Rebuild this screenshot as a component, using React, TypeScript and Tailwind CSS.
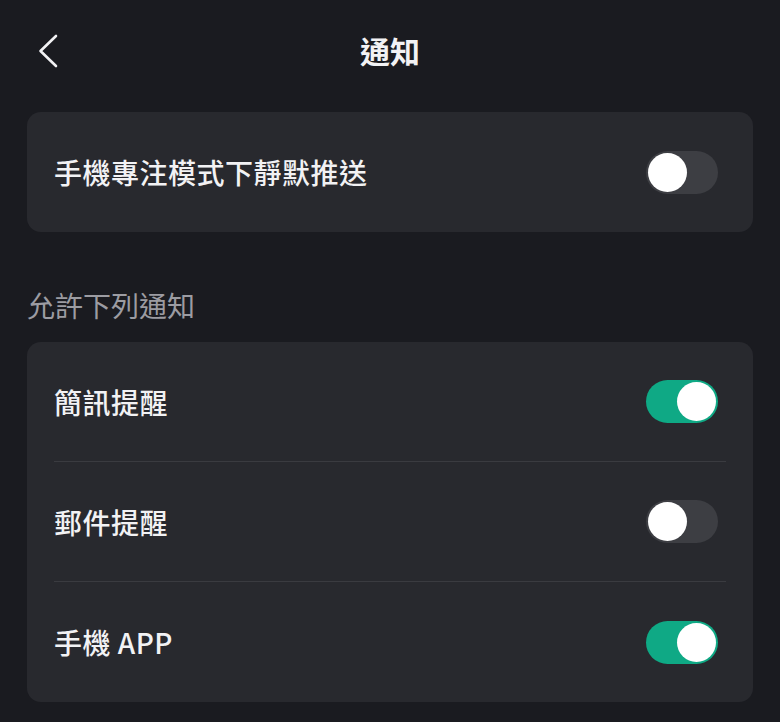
import { useState } from 'react';

function Toggle({ on, onChange }: { on: boolean; onChange: () => void }) {
    return (
        <button
            onClick={onChange}
            className={`relative w-[72px] h-[43px] rounded-full shrink-0 transition-colors ${on ? 'bg-[#0fa985]' : 'bg-[#3d3e43]'}`}
        >
            <span
                className={`absolute top-[2px] w-[39px] h-[39px] rounded-full bg-white transition-all ${on ? 'left-[31px]' : 'left-[2px]'}`}
            />
        </button>
    );
}

function Row({ label, on, onChange, divider }: { label: string; on: boolean; onChange: () => void; divider?: boolean }) {
    return (
        <div className="px-[27px]">
            <div className={`h-[120px] flex items-center justify-between pr-[8px] ${divider ? 'border-b border-[#3a3b40]' : ''}`}>
                <span className="text-[28px] font-medium text-[#f2f2f4] tracking-[0.5px]">{label}</span>
                <Toggle on={on} onChange={onChange} />
            </div>
        </div>
    );
}

export default function App() {
    const [focusMode, setFocusMode] = useState(false);
    const [sms, setSms] = useState(true);
    const [mail, setMail] = useState(false);
    const [app, setApp] = useState(true);

    return (
        <div
            className="min-h-screen w-full bg-[#1a1b20] px-[27px]"
            style={{ fontFamily: '"Noto Sans CJK TC", "Noto Sans", sans-serif' }}
        >
            {/* Header */}
            <div className="relative h-[100px] flex items-center justify-center">
                <button className="absolute left-[3px] top-[32px] w-[36px] h-[38px] flex items-center justify-center">
                    <svg width="22" height="36" viewBox="0 0 22 36" fill="none">
                        <path d="M19 3 L3.5 18 L19 33" stroke="#f2f2f4" strokeWidth="2.6" strokeLinecap="round" strokeLinejoin="round" />
                    </svg>
                </button>
                <h1 className="text-[30px] font-bold text-[#f2f2f4]">通知</h1>
            </div>

            <div className="mt-[12px] rounded-[14px] bg-[#28292e]">
                <Row label="手機專注模式下靜默推送" on={focusMode} onChange={() => setFocusMode(!focusMode)} />
            </div>

            <div className="pt-[54px] pb-[18px] text-[28px] text-[#9c9ca2] leading-[38px]">允許下列通知</div>

            <div className="rounded-[14px] bg-[#28292e]">
                <Row label="簡訊提醒" on={sms} onChange={() => setSms(!sms)} divider />
                <Row label="郵件提醒" on={mail} onChange={() => setMail(!mail)} divider />
                <Row label="手機 APP" on={app} onChange={() => setApp(!app)} />
            </div>
        </div>
    );
}
